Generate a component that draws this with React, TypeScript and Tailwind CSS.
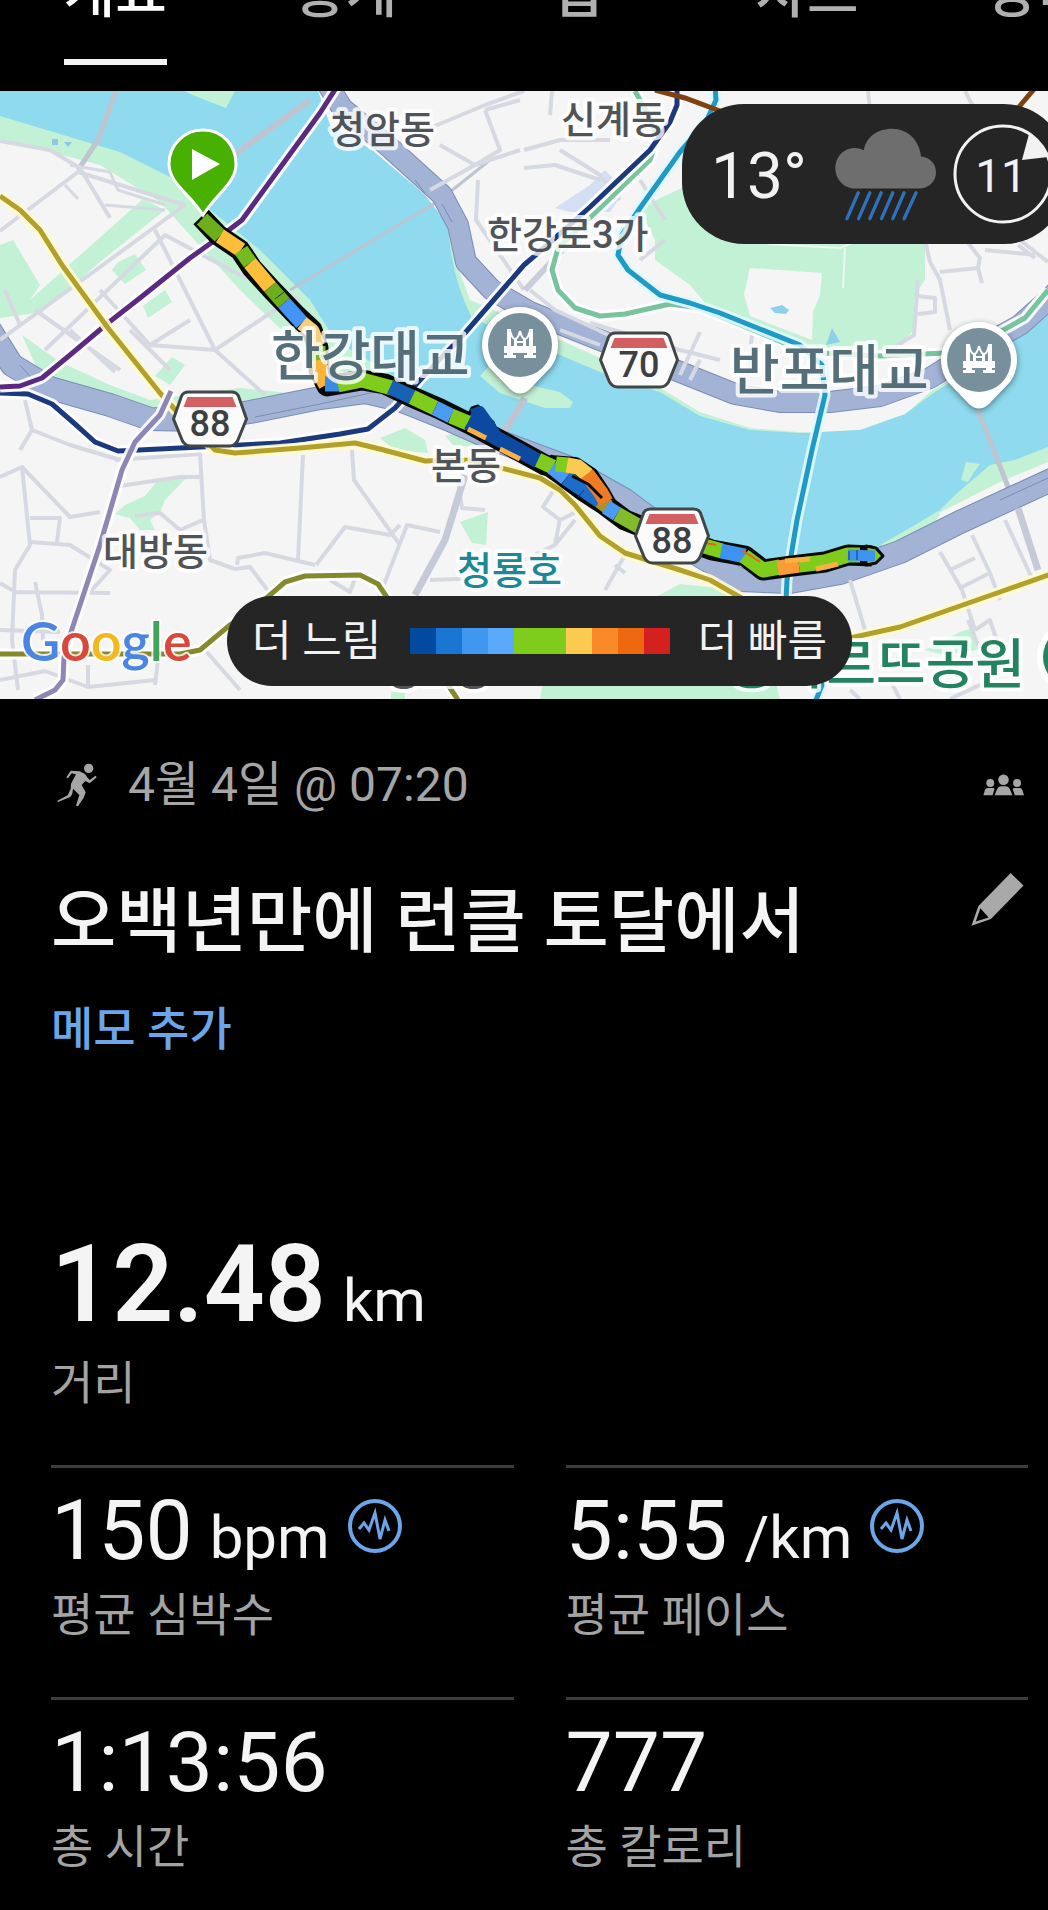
import React from "react";

const tabs = ["개요", "통계", "랩", "차트", "장비"];

const paceScale = [
  "bg-[#004a9f]",
  "bg-[#1976d2]",
  "bg-[#3f97f0]",
  "bg-[#5aa9fb]",
  "bg-[#80cc1c]",
  "bg-[#80cc1c]",
  "bg-[#fbca50]",
  "bg-[#fa8a28]",
  "bg-[#ee680f]",
  "bg-[#d52020]",
];

function Rail({ d, color, width = 5, casing = "#fff" }: { d: string; color: string; width?: number; casing?: string }) {
  return (
    <g fill="none" strokeLinejoin="round">
      <path d={d} stroke={casing} strokeWidth={width + 6} opacity="0.9" />
      <path d={d} stroke={color} strokeWidth={width} />
    </g>
  );
}

function Place({
  x,
  y,
  size = 38,
  color = "#505459",
  anchor = "start",
  children,
}: {
  x: number;
  y: number;
  size?: number;
  color?: string;
  anchor?: "start" | "end";
  children: React.ReactNode;
}) {
  return (
    <text
      x={x}
      y={y}
      fontSize={size}
      fill={color}
      textAnchor={anchor}
      fontWeight="500"
      stroke="#fff"
      strokeOpacity="0.8"
      strokeWidth="8"
      strokeLinejoin="round"
      paintOrder="stroke"
    >
      {children}
    </text>
  );
}

function Shield({ x, y, w, children }: { x: number; y: number; w: number; children: React.ReactNode }) {
  const a = w / 2;
  return (
    <g transform={`translate(${x} ${y})`}>
      <path
        d={`M${-a + 15} -27H${a - 15}Q${a - 10} -27 ${a - 8} -23L${a} 0L${a - 9} 22Q${a - 12} 27 ${a - 17} 27H${-a + 17}Q${-a + 12} 27 ${-a + 9} 22L${-a} 0L${-a + 8} -23Q${-a + 10} -27 ${-a + 15} -27Z`}
        fill="#fbfbfb"
        stroke="#414649"
        strokeWidth="3"
      />
      <path d={`M${-a + 14} -22H${a - 14}L${a - 10} -12H${-a + 10}Z`} fill="#d35f63" />
      <text y="17" fontSize="36" fontWeight="500" textAnchor="middle" fill="#3c4043">
        {children}
      </text>
    </g>
  );
}

function BridgePin({ x, y }: { x: number; y: number }) {
  return (
    <g transform={`translate(${x} ${y})`}>
      <path
        d="M0 -38A38 38 0 0 1 31 22L10 44Q0 53 -10 44L-31 22A38 38 0 0 1 0 -38Z"
        fill="#fff"
        style={{ filter: "drop-shadow(0 2px 3px rgb(0 0 0 / 0.45))" }}
      />
      <circle r="32" fill="#78909c" />
      <g fill="#fff">
        <path d="M-13 -16H-9V2H-13ZM9 -16H13V2H9ZM-6 -7H-3V2H-6ZM3 -7H6V2H3Z" />
        <path d="M-16 1H16V8H-16ZM-13 8H-7V10H-4V13H-16V10H-13ZM7 8H13V10H16V13H4V10H7Z" />
        <path d="M-10 -15Q-8 -6 -5 -6Q-2 -6 0 -14M10 -15Q8 -6 5 -6Q2 -6 0 -14M-5 -3H5" fill="none" stroke="#fff" strokeWidth="2" />
      </g>
    </g>
  );
}

const northHighway =
  "M325 80L342 108L388 146L442 195L458 225L466 262L492 290L530 312L575 330L640 356L700 380L735 394L780 402L830 402L880 396L930 378L975 350L1020 325L1048 300L1060 288";
const southHighway =
  "M-10 330L12 365L50 388L110 405L150 419L200 420L250 412L320 398L365 392L400 400L445 418L495 440L565 466L625 500L700 556L740 580L790 582L840 573L900 552L960 522L1060 476";

const track = "M201 217L218 235L240 250L252 268L272 290L297 316L312 330L318 348L319 370L327 386L362 380L385 384L410 396L440 409L470 424L505 443L545 465L560 468";
const lowerLoop = "M545 463L562 475L585 492L605 505L625 520L650 530L690 542L712 550L745 556L763 570L792 566L825 562L848 555L872 556";
const upperLoop = "M550 464L575 466L590 476L602 494L612 512";

const splits: { d: string; color: string }[] = [
  { d: "M202 219L220 236", color: "#6cae1c" },
  { d: "M220 236L241 250", color: "#fdbf3b" },
  { d: "M241 250L250 263", color: "#74bb1d" },
  { d: "M250 263L270 287", color: "#fdbf3b" },
  { d: "M270 287L284 303", color: "#6cae1c" },
  { d: "M284 303L302 323", color: "#4494f5" },
  { d: "M302 323L312 331L318 346", color: "#f5cf7a" },
  { d: "M318 346V362", color: "#77b81f" },
  { d: "M319 360L321 376L326 385", color: "#fbb33c" },
  { d: "M325 384L340 384", color: "#3c8be4" },
  { d: "M338 385L362 380L392 388", color: "#80cc1c" },
  { d: "M390 387L412 397", color: "#1762b5" },
  { d: "M412 397L435 408", color: "#80cc1c" },
  { d: "M435 408L451 416", color: "#4c9bf3" },
  { d: "M451 416L468 423", color: "#80cc1c" },
  { d: "M468 422L500 440L538 461", color: "#0b4aa0" },
  { d: "M538 460L553 467", color: "#80cc1c" },
];

const returnSplits: { d: string; color: string }[] = [
  { d: "M552 467L566 478", color: "#4c9bf3" },
  { d: "M566 478L600 501", color: "#1d6cc9" },
  { d: "M600 501L608 507", color: "#a9922c" },
  { d: "M606 507L617 514", color: "#4c9bf3" },
  { d: "M617 514L640 527", color: "#80bc2c" },
  { d: "M556 464L568 465", color: "#80cc1c" },
  { d: "M567 465L578 467L588 475", color: "#fbca50" },
  { d: "M587 474L601 493L606 502", color: "#f07c22" },
  { d: "M690 542L722 551", color: "#80cc1c" },
  { d: "M721 551L745 556", color: "#3f93f0" },
  { d: "M744 556L763 570L780 567", color: "#80cc1c" },
  { d: "M778 568L799 565", color: "#fb9b35" },
  { d: "M799 565L825 562L848 555L860 555", color: "#80cc1c" },
];

function RunMap() {
  return (
    <svg
      viewBox="0 91 1048 608"
      preserveAspectRatio="xMidYMid slice"
      className="block h-[608px] w-full"
      role="img"
      aria-label="달리기 경로 지도"
      fontFamily='Roboto, "Noto Sans CJK KR", sans-serif'
    >
      <rect x="-400" y="0" width="1900" height="800" fill="#f5f5f5" />

      {/* Parks */}
      <g fill="#c3f1d5">
        <path d="M0 245L13 240L40 285L30 300L143 199L165 210L100 262L42 312L0 318Z" />
        <path d="M118 262L135 254L146 270L125 284L112 270ZM143 306L165 290L172 302L148 318ZM155 376L172 357L185 365L170 385Z" />
        <path d="M22 335L60 362L110 385L150 400L240 388L290 393L240 415L150 408L90 400L40 375Z" />
        <path d="M115 514L125 505L145 496L158 480L188 476L165 500L160 512L150 520L155 530L140 530L130 518Z" />
        <path d="M380 438L405 428L425 440L428 453L395 450ZM445 436L470 430L490 445L455 447ZM460 522L488 512L486 545L472 543Z" />
        <path d="M640 210L660 198L700 180L925 220L925 280L915 295L914 330L895 350L830 352L800 344L755 325L706 304L690 285L655 260L655 240Z" />
        <path d="M650 600L680 584L720 588L760 620L780 699H540L545 670ZM925 650L960 632L975 627L977 650L945 655Z" />
        <path d="M391 692H405V699H391Z" />
      </g>
      <path d="M750 268L822 273L820 295L813 312L812 340L750 316L744 294Z" fill="#f5f5f5" />
      <path d="M768 244L840 248L880 232M845 248L843 288" fill="none" stroke="#eafaf0" strokeWidth="2" />
      <path d="M770 308L782 305L789 310L786 314L775 313ZM832 328L840 342L826 345Z" fill="#8fd0ea" />
      <path d="M555 208L590 185L605 170L625 190L610 212L570 212Z" fill="#d5dff3" />

      {/* River with its green banks */}
      <path
        d="M0 91H318L330 125L372 150L425 195L448 225L455 260L470 300L530 325L560 340L640 376L700 412L750 428L810 433L870 429L905 415L930 392L990 355L1048 308V462L1000 482L905 530L880 553L790 570L700 560L620 490L440 412L330 376L240 290L190 235L160 202L100 165L0 139Z"
        fill="#c3f1d5"
      />
      <path
        d="M0 91H318L330 125L372 150L425 195L448 225L450 245Q455 285 472 318L560 355L600 372L660 392L700 416L750 430L800 433L860 430L905 414L935 392L990 358L1048 315V447L1015 460L990 465L955 495L935 515L925 530L885 548L860 553L830 557L765 567L740 555L690 540L620 492L560 464L520 445L470 412L410 386L335 340L310 300L260 250L213 212L170 177L120 152L60 134L0 116Z"
        fill="#8fdaee"
      />
      <g fill="#c3f1d5">
        <path d="M184 91H235L226 108L200 98Z" />
        <path d="M480 376L490 365L530 385L560 392L573 402L570 408L545 408L500 393Z" />
        <path d="M880 545L915 525L938 511L940 515L925 533L900 547Z" />
        <path d="M966 462L980 464L974 472L968 482L961 480Z" />
      </g>
      <path d="M52 139H58V145H52ZM64 142H72L68 147Z" fill="#8fc6ea" />

      {/* Bridges */}
      <g fill="none" stroke="#bfc4d1">
        <path d="M116 91L98 140L78 170" strokeWidth="5" />
        <path d="M310 100L238 152L190 190" strokeWidth="6" />
        <path d="M290 290L340 260L440 200L490 160" strokeWidth="3" />
        <path d="M525 398L502 435" strokeWidth="7" />
        <path d="M978 410L1010 492" strokeWidth="5" />
      </g>

      {/* Expressways */}
      <g fill="none" strokeLinejoin="round">
        <path d={northHighway} stroke="#7b8cb6" strokeWidth="22" />
        <path d={northHighway} stroke="#a3b3d5" strokeWidth="20" />
        <path d={southHighway} stroke="#7b8cb6" strokeWidth="24" />
        <path d={southHighway} stroke="#a3b3d5" strokeWidth="22" />
        <path d="M255 417L320 404L375 392M415 180L425 193M442 204L452 222M1000 500L1048 478M20 365L35 382" stroke="#7b8cb6" strokeWidth="1" />
      </g>

      {/* Streets */}
      <g fill="none" stroke="#d6d9e2" strokeWidth="4" strokeLinejoin="round">
        <path d="M0 231L78 172L185 205M0 141L50 150L80 168L110 218M185 205L0 340M155 230L215 350L265 395M45 350L165 235L240 275L300 300M35 310L120 370M70 330L115 372M100 290L150 345L215 350L290 300M130 330L170 370M5 290L20 325M150 345L190 320" />
        <path d="M70 165L110 172L118 190L165 205M65 185L78 199M105 205L165 210" strokeWidth="3" />
        <path d="M25 400L32 430L70 445L120 460M32 430L20 450M0 477L22 467L30 545L15 570L12 640L18 690M22 467L70 517L100 512M30 518H60L57 542M30 542L70 545L110 570L90 592M0 583L15 592L110 593M35 582L42 615L43 640M0 630L60 632M0 680L45 671L88 687L155 680M88 665V687" />
        <path d="M115 460L200 454L204 520L210 560L235 569L250 567L275 600M120 486L180 477L203 477M135 516L160 513L180 530L203 520M237 565L238 558L265 553L315 565M303 455L298 560M352 450L354 480L400 545M316 565L345 527L390 535L400 525M378 600L407 525L440 532M458 480L462 508L485 510M205 650L240 690M155 685L158 660M330 580L350 592L358 570M430 580L485 578" />
        <path d="M465 475L445 540L415 595" stroke="#c6cad8" strokeWidth="7" />
        <path d="M485 110L520 100M430 128L485 105L524 91M485 110L500 150L475 165L440 145M524 150L560 140L610 140M524 168L555 165L600 180M550 115L552 91M560 150L600 175L620 200M430 190L475 165L520 150M478 180L476 220L524 290M640 180L665 220M640 260L665 240M530 290L555 310L630 345" />
        <path d="M525 290L600 210L620 185" stroke="#c9cddb" strokeWidth="6" />
        <path d="M590 323L680 350L720 360M560 330L600 345M700 332L680 375M655 345L640 380M752 335L745 395M690 380L700 360M925 240L930 262L940 280L950 330M918 280L914 335L890 350M940 272L978 268L982 283M966 240L980 258L978 268M985 250L1035 255M1020 240L1048 262M917 296L935 298V312L918 314M868 91L870 110M965 91L975 110M1018 245L1035 258" />
        <path d="M555 488L543 507L560 520L580 510M560 518L555 545L524 560M555 545L575 520M625 555L605 590M615 565L625 573M850 580L865 630M940 552L962 590L975 630M972 535L990 573L1000 600M950 570L975 558M960 588L988 574M1005 520L1035 585M968 620L980 650M975 630L990 620L1000 650M850 690L860 699M890 680L900 699M950 699L980 685" />
        <path d="M1018 508L1038 570" stroke="#c6cad8" strokeWidth="7" />
      </g>

      {/* Railways */}
      <Rail d="M635 91L650 118L657 140L650 160L595 213L558 248L552 270L558 290L575 308L600 316L625 314L670 304L700 308L765 335L805 352L880 356L945 353L985 340L1025 318L1048 290" color="#78c49e" />
      <Rail d="M0 393L28 394L52 404L75 424L95 442L118 451L180 448L280 443L340 434L368 429L395 408L420 380L465 333L524 265L545 247L590 207L650 150L670 122L677 105V85" color="#1b3a7e" />
      <Rail d="M338 85L320 113L242 220L225 233L190 258L140 298L108 323L70 355L42 378L20 386L0 387" color="#5b2a80" />
      <Rail d="M0 196L20 210L40 230L62 265L108 328L160 393L180 415L215 450L235 453L300 448L355 443L380 449L425 461L470 460L540 478L560 490L575 505L600 536L625 553L680 570L710 580L745 600" color="#b3a02a" casing="#fffbd0" />
      <Rail d="M850 638L900 627L940 613L1000 592L1060 571" color="#b3a02a" casing="#fffbd0" />
      <Rail d="M0 654H180L200 650L230 625L262 602L285 582L305 576L360 575L378 584L390 602M448 685L458 700" color="#848a2c" />
      <Rail d="M171 391L160 415L135 442L122 470L100 545L70 635L64 658L63 680L55 690L35 700" color="#8e86b4" />
      <Rail d="M715 85L716 100L706 122L680 152L640 208L622 235L618 255L628 270L660 295L690 303L720 313L800 345L822 365L825 395L812 450L797 520L787 580L785 620L822 685L816 700" color="#1f9ac5" casing="#dff8ff" />
      <path d="M655 90L685 98L720 111M1035 88L1018 108" fill="none" stroke="#7e4210" strokeWidth="5" />

      <Place x={330} y={143}>청암동</Place>
      <Place x={561} y={133}>신계동</Place>
      <Place x={487} y={248}>한강로3가</Place>
      <Place x={431} y={479}>본동</Place>
      <Place x={103} y={565}>대방동</Place>
      <Place x={457} y={584} color="#1c8795">청룡호</Place>
      <Place x={386} y={685}>상도동</Place>

      {/* Recorded run */}
      <g fill="none" stroke="#080a08" strokeLinejoin="round">
        <path d={track} strokeWidth="21" />
        <path d={lowerLoop} strokeWidth="21" />
        <path d={upperLoop} strokeWidth="18" />
        <path d="M467 418L472 408L478 406L484 414L493 422L497 432Z" fill="#0b4aa0" strokeWidth="3" />
        <path d="M866 546L876 548L883 556L876 563L866 565Z" fill="#80cc1c" strokeWidth="3" />
      </g>
      <g fill="none" strokeLinejoin="round" strokeWidth="15">
        {splits.map((s) => (
          <path key={s.d} d={s.d} stroke={s.color} />
        ))}
        {returnSplits.map((s) => (
          <path key={s.d} d={s.d} stroke={s.color} />
        ))}
        <path d="M848 555L875 556" stroke="#3f93f0" strokeWidth="11" />
        <path d="M472 414L480 411L490 425L497 436" stroke="#0b4aa0" strokeWidth="10" />
        <path d="M468 429L486 438M500 449L520 459M816 569L838 564M785 561L810 559" stroke="#fbb040" strokeWidth="5" />
        <path d="M706 543L716 545M742 550L760 562" stroke="#e06420" strokeWidth="2" />
        <path d="M572 476L588 484L602 498" stroke="#0d0d0d" strokeWidth="3" />
        <path d="M275 299L284 292M857 550V560M849 551V560M578 497L584 490" stroke="#143d70" strokeWidth="1" />
      </g>

      <Place x={271} y={376} size={54} color="#546e7a">한강대교</Place>
      <Place x={730} y={390} size={54} color="#546e7a">반포대교</Place>
      <Place x={1025} y={684} size={54} color="#23825f" anchor="end">몽마르뜨공원</Place>

      <circle cx="1074" cy="657" r="37" fill="#fff" />
      <circle cx="1074" cy="657" r="31" fill="#23825f" />
      <Shield x={210} y={419} w={73}>88</Shield>
      <Shield x={639} y={360} w={77}>70</Shield>
      <Shield x={672} y={536} w={73}>88</Shield>
      <BridgePin x={520} y={345} />
      <BridgePin x={979} y={360} />

      {/* Start marker */}
      <path d="M203 130C222 130 236 145 236 164C236 183 217 193 203 215C189 193 169 183 169 164C169 145 184 130 203 130Z" fill="#47b000" stroke="#fff" strokeWidth="3" />
      <path d="M192 149L220 164L192 180Z" fill="#fff" />

      <text x="21" y="661" fontSize="54" fontWeight="600" fontFamily="Lato, sans-serif" stroke="#fff" strokeOpacity="0.8" strokeWidth="4" paintOrder="stroke">
        <tspan fill="#4a85e4">G</tspan>
        <tspan fill="#d8483c">o</tspan>
        <tspan fill="#f2b81c">o</tspan>
        <tspan fill="#4a85e4">g</tspan>
        <tspan fill="#42a35a">l</tspan>
        <tspan fill="#d8483c">e</tspan>
      </text>
    </svg>
  );
}

function Weather() {
  return (
    <div className="absolute top-[13px] -right-[18px] flex h-[140px] w-[384px] items-center rounded-[62px] bg-[#252525] pl-[29px] text-[#f2f2f2]">
      <span className="w-[124px] pt-[6px] text-[64px] leading-none">13°</span>
      <svg viewBox="226 112 304 278" className="h-[93px] w-[101px]" aria-label="비">
        <path
          d="M286 293C252 293 227 264 227 232C227 198 252 171 286 171Q300 171 313 178C318 140 352 113 398 113C446 113 481 150 485 197C510 200 530 217 530 244C530 272 508 293 480 293Z"
          fill="#6e6e6e"
        />
        <path d="M296 306L262 384M331 306L297 384M365 306L331 384M400 306L366 384M434 306L400 384M470 306L434 384" stroke="#2f72b8" strokeWidth="10" strokeLinecap="round" />
      </svg>
      <svg viewBox="0 0 100 100" className="ml-[17px] size-[100px]" aria-label="풍속 11">
        <circle cx="50" cy="50" r="48" fill="none" stroke="#f2f2f2" strokeWidth="3" />
        <path d="M76 10Q90 20 96 33L69 36Z" fill="#f2f2f2" />
        <text x="48" y="68" fontSize="46" textAnchor="middle" fill="#f2f2f2">
          11
        </text>
      </svg>
    </div>
  );
}

function PaceLegend() {
  return (
    <div className="absolute bottom-[13px] left-[227px] flex h-[90px] w-[625px] items-center justify-between rounded-full bg-[#252525] px-[25px] text-[43px] leading-none text-[#f2f2f2]">
      <span>더 느림</span>
      <div className="flex">
        {paceScale.map((c, i) => (
          <i key={i} className={`h-[26px] w-[26px] ${c}`} />
        ))}
      </div>
      <span>더 빠름</span>
    </div>
  );
}

function PulseIcon() {
  return (
    <svg viewBox="0 0 54 54" className="size-[54px]" fill="none" stroke="#6ba5ea" aria-hidden="true">
      <circle cx="27" cy="27" r="25" strokeWidth="4" />
      <path d="M11 30L16 24L21 31L27 14L32 40L37 21L41 32" strokeWidth="3" />
    </svg>
  );
}

function Metric({ value, unit, label, graph }: { value: string; unit?: string; label: string; graph?: boolean }) {
  return (
    <div className="h-[232px] border-t-[3px] border-[#3d3d3d] pt-[21px]">
      <dd className="flex h-[84px] items-start">
        <span className="text-[84px] leading-[84px]">{value}</span>
        {unit && <span className="ml-[17px] text-[60px] leading-[98px]">{unit}</span>}
        {graph && (
          <button type="button" aria-label={`${label} 그래프`} className="mt-[10px] ml-[18px]">
            <PulseIcon />
          </button>
        )}
      </dd>
      <dt className="mt-[12px] text-[46px] leading-[60px] text-[#a3a3a3]">{label}</dt>
    </div>
  );
}

export default function App() {
  return (
    <div className="min-h-screen overflow-hidden bg-black text-[#f4f4f4] [font-family:Roboto,'Noto_Sans_CJK_KR',sans-serif]">
      <nav className="flex h-[91px] items-end overflow-hidden pb-[26px]">
        {tabs.map((t, i) => (
          <button
            key={t}
            type="button"
            aria-current={i === 0 ? "page" : undefined}
            className={
              i === 0
                ? "flex w-[22%] shrink-0 justify-center font-medium text-white"
                : "flex w-[22%] shrink-0 justify-center font-medium text-[#b0b0b0]"
            }
          >
            <span
              className={
                i === 0
                  ? "border-b-[6px] border-[#f4f4f4] pb-[34px] text-[56px] leading-[64px]"
                  : "border-b-[6px] border-transparent pb-[34px] text-[56px] leading-[64px]"
              }
            >
              {t}
            </span>
          </button>
        ))}
      </nav>

      <section className="relative overflow-hidden">
        <RunMap />
        <Weather />
        <PaceLegend />
      </section>

      <main className="pr-[20px] pl-[51px]">
        <header className="pt-[56px]">
          <div className="flex items-center pr-[4px] pl-[6px] text-[#a6a6a6]">
            <svg viewBox="172 64 120 132" className="h-[44px] w-[40px]" fill="currentColor" aria-hidden="true">
              <circle cx="267" cy="80" r="14" />
              <path d="M213 87L240 89L256 97L262 106L270 115L288 102L291 107L270 125L257 118L246 130L258 152L252 168L235 194L229 192L239 160L220 141L218 156L212 166L175 181L173 177L204 161L213 142L214 126L229 98L216 95L205 110L200 107Z" />
            </svg>
            <time className="ml-[31px] grow text-[48px] leading-[60px]">4월 4일 @ 07:20</time>
            <svg viewBox="1372 98 124 66" className="h-[22px] w-[41px]" fill="currentColor" aria-label="공개 범위">
              <circle cx="1434" cy="115" r="16" />
              <circle cx="1394" cy="125" r="12" />
              <circle cx="1475" cy="125" r="12" />
              <path d="M1407 162L1415 143Q1418 135 1427 135H1441Q1450 135 1453 143L1461 162ZM1373 162L1378 146Q1380 140 1386 140H1403Q1408 140 1406 146L1401 162ZM1496 162L1491 146Q1489 140 1483 140H1466Q1461 140 1463 146L1468 162Z" />
            </svg>
          </div>
          <div className="mt-[56px] flex items-start justify-between pr-[4px]">
            <h1 className="text-[71px] leading-[102px] font-medium">오백년만에 런클 토달에서</h1>
            <button type="button" aria-label="이름 편집" className="mt-[2px]">
              <svg viewBox="1336 400 160 161" className="size-[53px]" fill="#a9a9a9">
                <path fillRule="evenodd" d="M1456 400L1495 438L1396 540L1337 560L1358 500ZM1364 507L1350 547L1389 535Z" />
              </svg>
            </button>
          </div>
          <a href="#memo" className="mt-[26px] inline-block text-[46px] leading-[60px] font-medium text-[#6ba5ea]">
            메모 추가
          </a>
        </header>

        <dl className="mt-[166px]">
          <div className="h-[240px]">
            <dd className="flex items-baseline leading-[120px]">
              <span className="text-[107px] font-semibold">12.48</span>
              <span className="ml-[17px] text-[60px]">km</span>
            </dd>
            <dt className="-mt-[8px] text-[46px] leading-[60px] text-[#a3a3a3]">거리</dt>
          </div>
          <div className="grid grid-cols-2 gap-x-[52px]">
            <Metric value="150" unit="bpm" label="평균 심박수" graph />
            <Metric value="5:55" unit="/km" label="평균 페이스" graph />
            <Metric value="1:13:56" label="총 시간" />
            <Metric value="777" label="총 칼로리" />
          </div>
        </dl>
      </main>
    </div>
  );
}
